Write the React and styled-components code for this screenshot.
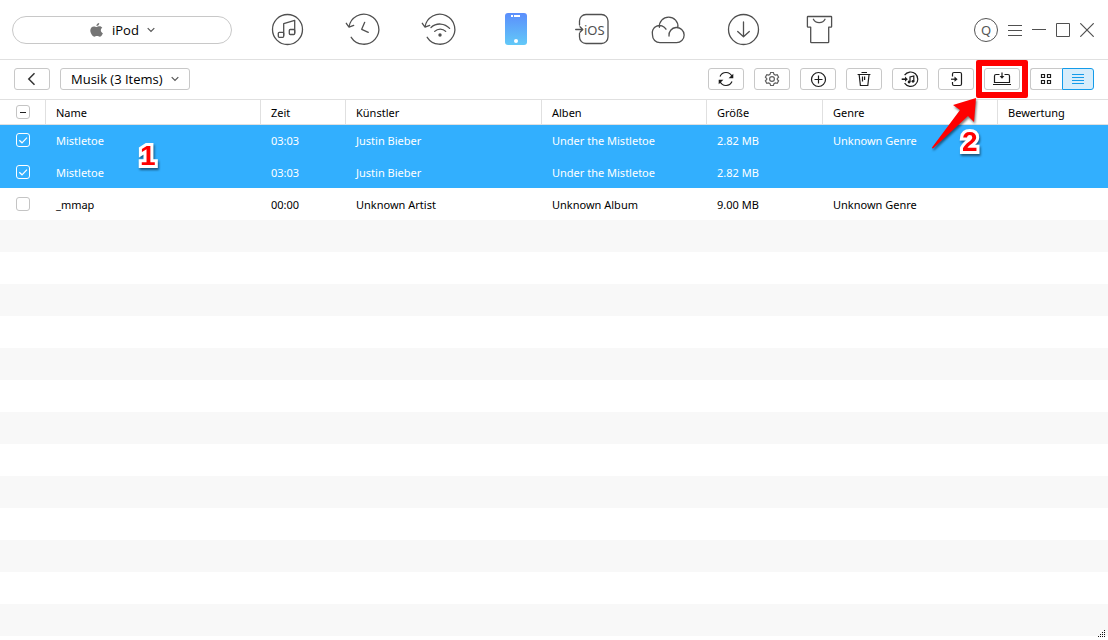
import React, { useEffect, useRef, useState } from "react";
import styled, { createGlobalStyle, css } from "styled-components";

const GlobalStyle = createGlobalStyle`
  *, *::before, *::after { box-sizing: border-box; }
  body {
    margin: 0;
    background: #fff;
    color: #000;
    font-family: "Noto Sans", "Open Sans", sans-serif;
    font-size: 11px;
  }
  button, select, input { font: inherit; color: inherit; margin: 0; }
`;

const Page = styled.div`
  position: relative;
  display: flex;
  flex-direction: column;
  min-height: 100vh;
`;

const TopBar = styled.header`
  display: flex;
  align-items: center;
  height: 60px;
  padding: 0 9px 0 12px;
  border-bottom: 1px solid #e0e0e0;
`;

const DeviceField = styled.div`
  position: relative;
  flex: 0 0 220px;
  margin-right: 17px;
`;

const DeviceSelect = styled.select`
  appearance: none;
  display: block;
  width: 100%;
  height: 28px;
  padding: 0 60px 0 99px;
  border: 1px solid #c8c8c8;
  border-radius: 14px;
  background: #fff;
  font-family: "Open Sans", sans-serif;
  font-size: 13px;
`;

const FieldIcon = styled.svg`
  position: absolute;
  top: 0;
  bottom: 0;
  left: ${(p) => p.$left}px;
  margin: auto 0;
  pointer-events: none;
`;

const Nav = styled.nav`
  display: flex;
  flex: 1;
`;

const NavButton = styled.button`
  display: flex;
  align-items: center;
  justify-content: center;
  width: 76px;
  height: 59px;
  padding: 0;
  border: 0;
  background: none;
`;

const NavIcon = styled.svg`
  width: 36px;
  height: 37px;
  overflow: visible;
  fill: none;
  stroke: #505050;
  stroke-width: 1.3;
  stroke-linecap: round;
  stroke-linejoin: round;
`;

const WindowControls = styled.div`
  display: flex;
  align-items: center;
`;

const Avatar = styled.button`
  width: 24px;
  height: 24px;
  margin-right: 5px;
  padding: 0;
  border: 1px solid #555;
  border-radius: 50%;
  background: #fff;
  color: #555;
  font-size: 13px;
  line-height: 20px;
`;

const WindowButton = styled.button`
  display: flex;
  align-items: center;
  justify-content: center;
  width: 24px;
  height: 24px;
  padding: 0;
  border: 0;
  background: none;
`;

const ToolBar = styled.div`
  display: flex;
  align-items: center;
  justify-content: space-between;
  height: 40px;
  padding: 0 14px 1px;
  border-bottom: 1px solid #e0e0e0;
`;

const ToolGroup = styled.div`
  display: flex;
  align-items: center;
  gap: 10px;
`;

const ToolButton = styled.button`
  display: flex;
  align-items: center;
  justify-content: center;
  width: 36px;
  height: 22px;
  padding: 0;
  border: 1px solid #c8c8c8;
  border-radius: 3px;
  background: #fff;
`;

const ToolIcon = styled.svg`
  width: 18px;
  height: 18px;
  fill: none;
  stroke: ${(p) => p.$color || "#1c1c1c"};
  stroke-width: 1.2;
`;

const CategoryField = styled.div`
  position: relative;
  width: 130px;
`;

const CategorySelect = styled.select`
  appearance: none;
  display: block;
  width: 100%;
  height: 22px;
  padding: 0 20px 0 10px;
  border: 1px solid #c8c8c8;
  border-radius: 3px;
  background: #fff;
  font-family: "Open Sans", sans-serif;
  font-size: 13px;
  line-height: 20px;
`;

const ViewSwitch = styled.div`
  display: flex;
`;

const ViewButton = styled(ToolButton)`
  width: 32px;
  ${(p) =>
    p.$active
      ? css`
          border-color: #149be9;
          border-radius: 0 3px 3px 0;
          background: #d7edfb;
        `
      : css`
          border-right: 0;
          border-radius: 3px 0 0 3px;
        `}
`;

const Callout = styled.div`
  position: relative;
`;

const CalloutFrame = styled.div`
  position: absolute;
  inset: -8px;
  border: 6px solid #f00;
  border-radius: 2px;
  pointer-events: none;
`;

const CalloutArrow = styled.svg`
  position: absolute;
  z-index: 2;
  top: 26px;
  right: 43px;
  pointer-events: none;
  filter: drop-shadow(1px 2px 1px rgba(0, 0, 0, 0.5));
`;

const StepNumber = styled.span`
  position: absolute;
  z-index: 2;
  top: ${(p) => p.$top}px;
  left: ${(p) => p.$left}px;
  color: #f00;
  font: bold 28px/32px "Liberation Sans", Arial, sans-serif;
  -webkit-text-stroke: 6px #fff;
  paint-order: stroke fill;
  stroke-linejoin: round;
  filter: drop-shadow(1px 2px 1px rgba(0, 0, 0, 0.5));
  pointer-events: none;
`;

const Table = styled.table`
  width: 100%;
  table-layout: fixed;
  border-spacing: 0;
`;

const Col = styled.col`
  width: ${(p) => (p.$width ? `${p.$width}px` : "auto")};
`;

const HeadCell = styled.th`
  position: relative;
  height: 24px;
  padding: 0 10px;
  border-right: 1px solid #e0e0e0;
  box-shadow: 0 1px #e0e0e0;
  font-weight: normal;
  text-align: left;
  z-index: 1;
  &:last-child { border-right: 0; }
`;

const Row = styled.tr`
  background: ${(p) => (p.$selected ? "#32affe" : "#fff")};
  color: ${(p) => (p.$selected ? "#fff" : "#000")};
`;

const Cell = styled.td`
  position: relative;
  height: 32px;
  padding: 0 10px;
  white-space: nowrap;
`;

const CheckBox = styled.div`
  position: relative;
  width: 14px;
  height: 14px;
  margin-left: 6px;
`;

const CheckInput = styled.input`
  appearance: none;
  display: block;
  width: 14px;
  height: 14px;
  border: 1px solid ${(p) => (p.checked ? "#fff" : "#c4c4c4")};
  border-radius: 3px;
`;

const CheckMark = styled.svg`
  position: absolute;
  inset: 0;
  fill: none;
  pointer-events: none;
`;

const EmptyRows = styled.div`
  flex: 1;
  background: repeating-linear-gradient(#f8f8f8 0 32px, #fff 32px 64px);
`;

const Grip = styled.svg`
  position: absolute;
  right: 3px;
  bottom: 3px;
`;

function Chevron({ left }) {
  return (
    <FieldIcon $left={left} width="8" height="6" viewBox="0 0 8 6" fill="none" stroke="#555" strokeWidth="1.2">
      <path d="M.7 1.2 4 4.5 7.3 1.2" />
    </FieldIcon>
  );
}

const HISTORY_RING = "M4 16A15 15 0 1 1 6.2 26.3M1.3 12.3 4 16.2 8.7 14.3";

const navItems = [
  {
    label: "Musik",
    icon: (
      <>
        <circle cx="18.5" cy="18.5" r="15" />
        <path d="M14.7 24.3V12.7L25.7 9.3V22" />
        <rect x="9.3" y="21.3" width="5.4" height="5" rx="1" />
        <rect x="20.3" y="18.5" width="5.4" height="5" rx="1" />
      </>
    ),
  },
  {
    label: "Verlauf",
    icon: (
      <>
        <path d={HISTORY_RING} />
        <path d="M19.7 11.3 16.7 18.3 23.3 21.3" />
      </>
    ),
  },
  {
    label: "WLAN-Backup",
    icon: (
      <>
        <path d={HISTORY_RING} />
        <path d="M10 16.5A13 13 0 0 1 28.6 17.4M13.7 20.4A7.6 7.6 0 0 1 24.7 20.4" />
        <circle cx="19" cy="24" r="1.7" fill="#505050" stroke="none" />
      </>
    ),
  },
  {
    label: "Gerät",
    icon: (
      <>
        <defs>
          <linearGradient id="phone" x1="0" y1="0" x2="0" y2="1">
            <stop offset="0" stopColor="#5b8efc" />
            <stop offset="1" stopColor="#62c9f8" />
          </linearGradient>
        </defs>
        <g stroke="none" fill="#fff">
          <rect x="8" y="2" width="22" height="32" rx="3" fill="url(#phone)" />
          <rect x="14" y="4" width="2" height="2" />
          <rect x="17" y="4" width="6" height="2" />
          <circle cx="19" cy="30" r="2" />
        </g>
      </>
    ),
  },
  {
    label: "Zu iOS",
    icon: (
      <>
        <path d="M6.5 14V10A6.5 6.5 0 0 1 13 3.5H28.5A6.5 6.5 0 0 1 35 10V26A6.5 6.5 0 0 1 28.5 32.5H13A6.5 6.5 0 0 1 6.5 26V22.5" />
        <path d="M2.7 18.5H9.6M7 15.7 9.8 18.5 7 21.3" />
        <text x="11" y="23.5" fontSize="13" fill="#505050" stroke="none">iOS</text>
      </>
    ),
  },
  {
    label: "iCloud",
    icon: (
      <path d="M17 18.2A7.4 7.4 0 0 0 3.5 24 7.5 7.5 0 0 0 11 31.7H27.3A7.6 7.6 0 1 0 20 25M10.4 16.3A9.3 9.3 0 1 1 28.9 16.3" />
    ),
  },
  {
    label: "Download",
    icon: (
      <>
        <circle cx="18.5" cy="18.5" r="15" />
        <path d="M18.5 11V25.6M12.7 20.4 18.5 25.7 24.3 20.4" />
      </>
    ),
  },
  {
    label: "Design",
    icon: (
      <path d="M7 5.5H30Q30.6 5.5 30.6 6.1V15.5Q30.6 16.2 30 16.2H27.7V31Q27.7 31.7 27 31.7H10.4Q9.7 31.7 9.7 31V16.2H7.1Q6.4 16.2 6.4 15.5V6.1Q6.4 5.5 7 5.5ZM12.4 8.3C14.4 12.7 22 12.7 24 8.3" />
    ),
  },
];

const tools = [
  {
    label: "Aktualisieren",
    icon: (
      <>
        <path d="M3 6.4A6.5 6.5 0 0 1 15 6.6M15 11.6A6.5 6.5 0 0 1 3 11.4" />
        <path d="M16.3 3.8V8.3H11.6ZM1.7 14.2V9.7H6.4Z" fill="#1c1c1c" stroke="none" />
      </>
    ),
  },
  {
    label: "Einstellungen",
    color: "#606060",
    icon: (
      <>
        <path d="M7.6 2.5H10.4L11 4.4 12.3 5.1 14.2 4.7 15.6 7.1 14.3 8.5V9.5L15.6 10.9 14.2 13.3 12.3 12.9 11 13.6 10.4 15.5H7.6L7 13.6 5.7 12.9 3.8 13.3 2.4 10.9 3.7 9.5V8.5L2.4 7.1 3.8 4.7 5.7 5.1 7 4.4Z" />
        <circle cx="9" cy="9" r="2.4" />
      </>
    ),
  },
  {
    label: "Hinzufügen",
    icon: (
      <>
        <circle cx="9.5" cy="9.5" r="7" />
        <path d="M5.5 9.5H13.5M9.5 5.5V13.5" />
      </>
    ),
  },
  {
    label: "Löschen",
    icon: <path d="M2.6 4.5H15.4M6.5 2.5H12M4.2 5 5.4 15.5H12.8L14 5M7.5 6.5V11.5M9.6 6.5V10" />,
  },
  {
    label: "Zu iTunes",
    icon: (
      <>
        <path d="M3.6 5.2A7.2 7.2 0 1 1 3.6 13.2" />
        <path d="M.7 9.2H5" strokeWidth="1.6" />
        <path d="M4 6.6 6.8 9.2 4 11.8Z" fill="#1c1c1c" stroke="none" />
        <path d="M9 12V7L12.8 6V11.2" />
        <circle cx="8.1" cy="12" r="1.4" fill="#1c1c1c" stroke="none" />
        <circle cx="12" cy="11.3" r="1.4" fill="#1c1c1c" stroke="none" />
      </>
    ),
  },
  {
    label: "Zum Gerät",
    icon: (
      <>
        <path d="M5.5 6.5V4Q5.5 2.5 7 2.5H13Q14.5 2.5 14.5 4V14Q14.5 15.5 13 15.5H7Q5.5 15.5 5.5 14V12" />
        <path d="M4 9.2H8" />
        <path d="M7.5 6.6 10.6 9.2 7.5 11.8Z" fill="#1c1c1c" stroke="none" />
      </>
    ),
  },
];

const columns = [
  { label: "Name", width: 215 },
  { label: "Zeit", width: 85 },
  { label: "Künstler", width: 196 },
  { label: "Alben", width: 165 },
  { label: "Größe", width: 116 },
  { label: "Genre", width: 175 },
  { label: "Bewertung" },
];

const initialTracks = [
  { checked: true, cells: ["Mistletoe", "03:03", "Justin Bieber", "Under the Mistletoe", "2.82 MB", "Unknown Genre", ""] },
  { checked: true, cells: ["Mistletoe", "03:03", "Justin Bieber", "Under the Mistletoe", "2.82 MB", "", ""] },
  { checked: false, cells: ["_mmap", "00:00", "Unknown Artist", "Unknown Album", "9.00 MB", "Unknown Genre", ""] },
];

function Check({ checked, mixed, label, onChange }) {
  const ref = useRef(null);
  useEffect(() => {
    ref.current.indeterminate = Boolean(mixed);
  }, [mixed]);
  return (
    <CheckBox>
      <CheckInput ref={ref} type="checkbox" aria-label={label} checked={checked} onChange={onChange} />
      <CheckMark width="14" height="14" viewBox="0 0 14 14">
        {mixed && <path d="M4 7.5H10" stroke="#222" />}
        {checked && <path d="M3.3 7.2 6 9.8 11 4.6" stroke="#fff" strokeWidth="1.2" />}
      </CheckMark>
    </CheckBox>
  );
}

export default function App() {
  const [tracks, setTracks] = useState(initialTracks);
  const count = tracks.filter((t) => t.checked).length;
  const all = count === tracks.length;
  const toggle = (index) =>
    setTracks(tracks.map((t, i) => (i === index ? { ...t, checked: !t.checked } : t)));
  const toggleAll = () => setTracks(tracks.map((t) => ({ ...t, checked: !all })));

  return (
    <Page>
      <GlobalStyle />
      <TopBar>
        <DeviceField>
          <DeviceSelect aria-label="Gerät">
            <option>iPod</option>
          </DeviceSelect>
          <FieldIcon $left={78} width="13" height="16" viewBox="0 0 13 16" fill="#757575">
            <path d="M9.2 1C9.3 2.6 8 4.1 6.4 4.1 6.3 2.6 7.6 1.2 9.2 1ZM6.6 5C7.3 5 8.3 4.3 9.5 4.3 10.7 4.3 11.8 4.9 12.3 5.8 10.1 7.1 10.5 10.3 12.9 11.2 12.2 13 11 14.7 9.7 14.7 8.7 14.7 8.3 14.1 7 14.1 5.7 14.1 5.3 14.7 4.4 14.7 2.6 14.7.3 11.3.3 8.6.3 5.9 2 4.4 3.9 4.4 5 4.4 5.9 5 6.6 5Z" />
          </FieldIcon>
          <Chevron left={135} />
        </DeviceField>
        <Nav>
          {navItems.map((item) => (
            <NavButton key={item.label} aria-label={item.label}>
              <NavIcon viewBox="0 0 36 37">{item.icon}</NavIcon>
            </NavButton>
          ))}
        </Nav>
        <WindowControls>
          <Avatar aria-label="Konto">Q</Avatar>
          <WindowButton aria-label="Menü">
            <svg width="14" height="14" viewBox="0 0 14 14" stroke="#505050">
              <path d="M0 2.5H14M0 7.5H14M0 12.5H14" />
            </svg>
          </WindowButton>
          <WindowButton aria-label="Minimieren">
            <svg width="14" height="14" viewBox="0 0 14 14" stroke="#505050">
              <path d="M0 6.5H14" />
            </svg>
          </WindowButton>
          <WindowButton aria-label="Maximieren">
            <svg width="14" height="14" viewBox="0 0 14 14" fill="none" stroke="#505050">
              <path d="M.5.5H13.5V13.5H.5Z" />
            </svg>
          </WindowButton>
          <WindowButton aria-label="Schließen">
            <svg width="14" height="14" viewBox="0 0 14 14" stroke="#505050" strokeWidth="1.2">
              <path d="M.3.3 13.7 13.7M13.7.3.3 13.7" />
            </svg>
          </WindowButton>
        </WindowControls>
      </TopBar>

      <ToolBar>
        <ToolGroup>
          <ToolButton aria-label="Zurück">
            <ToolIcon viewBox="0 0 18 18" $color="#333">
              <path d="M11.5 3.3 5.8 9 11.5 14.7" strokeWidth="1.5" />
            </ToolIcon>
          </ToolButton>
          <CategoryField>
            <CategorySelect aria-label="Kategorie">
              <option>Musik (3 Items)</option>
            </CategorySelect>
            <Chevron left={111} />
          </CategoryField>
        </ToolGroup>
        <ToolGroup>
          {tools.map((tool) => (
            <ToolButton key={tool.label} aria-label={tool.label}>
              <ToolIcon viewBox="0 0 18 18" $color={tool.color}>{tool.icon}</ToolIcon>
            </ToolButton>
          ))}
          <Callout>
            <ToolButton aria-label="Zum Computer">
              <ToolIcon viewBox="0 0 18 18">
                <path d="M6.5 4.5H3Q1.5 4.5 1.5 6V12.5H16.5V6Q16.5 4.5 15 4.5H11.5M0 14.5H18M9 2.5V7" />
                <path d="M6.6 6H11.4L9 8.8Z" fill="#1c1c1c" stroke="none" />
              </ToolIcon>
            </ToolButton>
            <CalloutFrame />
            <CalloutArrow width="50" height="60" viewBox="0 0 50 60" fill="#f00">
              <path d="M49 4 26 11 33 16 5 53.5Q5 55 6.5 54L41 22 47 28Z" />
            </CalloutArrow>
            <StepNumber $top={58} $left={-22}>2</StepNumber>
          </Callout>
          <ViewSwitch>
            <ViewButton aria-label="Rasteransicht" aria-pressed="false">
              <ToolIcon viewBox="0 0 18 18">
                <path d="M3.5 4.5H6.5V7.5H3.5ZM9.5 4.5H12.5V7.5H9.5ZM3.5 10.5H6.5V13.5H3.5ZM9.5 10.5H12.5V13.5H9.5Z" />
              </ToolIcon>
            </ViewButton>
            <ViewButton $active aria-label="Listenansicht" aria-pressed="true">
              <ToolIcon viewBox="0 0 18 18" $color="#149be9">
                <path d="M3 4.5H15M3 7.5H15M3 10.5H15M3 13.5H15" strokeWidth="1" />
              </ToolIcon>
            </ViewButton>
          </ViewSwitch>
        </ToolGroup>
      </ToolBar>

      <Table>
        <colgroup>
          <Col $width={46} />
          {columns.map((c) => (
            <Col key={c.label} $width={c.width} />
          ))}
        </colgroup>
        <thead>
          <tr>
            <HeadCell>
              <Check label="Alle auswählen" checked={all} mixed={count > 0 && !all} onChange={toggleAll} />
            </HeadCell>
            {columns.map((c) => (
              <HeadCell key={c.label} scope="col">{c.label}</HeadCell>
            ))}
          </tr>
        </thead>
        <tbody>
          {tracks.map((track, index) => (
            <Row key={index} $selected={track.checked}>
              <Cell>
                <Check
                  label={`${track.cells[0]} auswählen`}
                  checked={track.checked}
                  onChange={() => toggle(index)}
                />
              </Cell>
              {track.cells.map((text, i) => (
                <Cell key={i}>
                  {text}
                  {index === 0 && i === 0 && <StepNumber $top={16} $left={94}>1</StepNumber>}
                </Cell>
              ))}
            </Row>
          ))}
        </tbody>
      </Table>
      <EmptyRows />
      <Grip width="7" height="7" viewBox="0 0 7 7" fill="#111">
        <path d="M6 0H7V1H6ZM4 2H5V3H4ZM6 2H7V3H6ZM2 4H3V5H2ZM4 4H5V5H4ZM6 4H7V5H6ZM0 6H1V7H0ZM2 6H3V7H2ZM4 6H5V7H4ZM6 6H7V7H6Z" />
      </Grip>
    </Page>
  );
}
